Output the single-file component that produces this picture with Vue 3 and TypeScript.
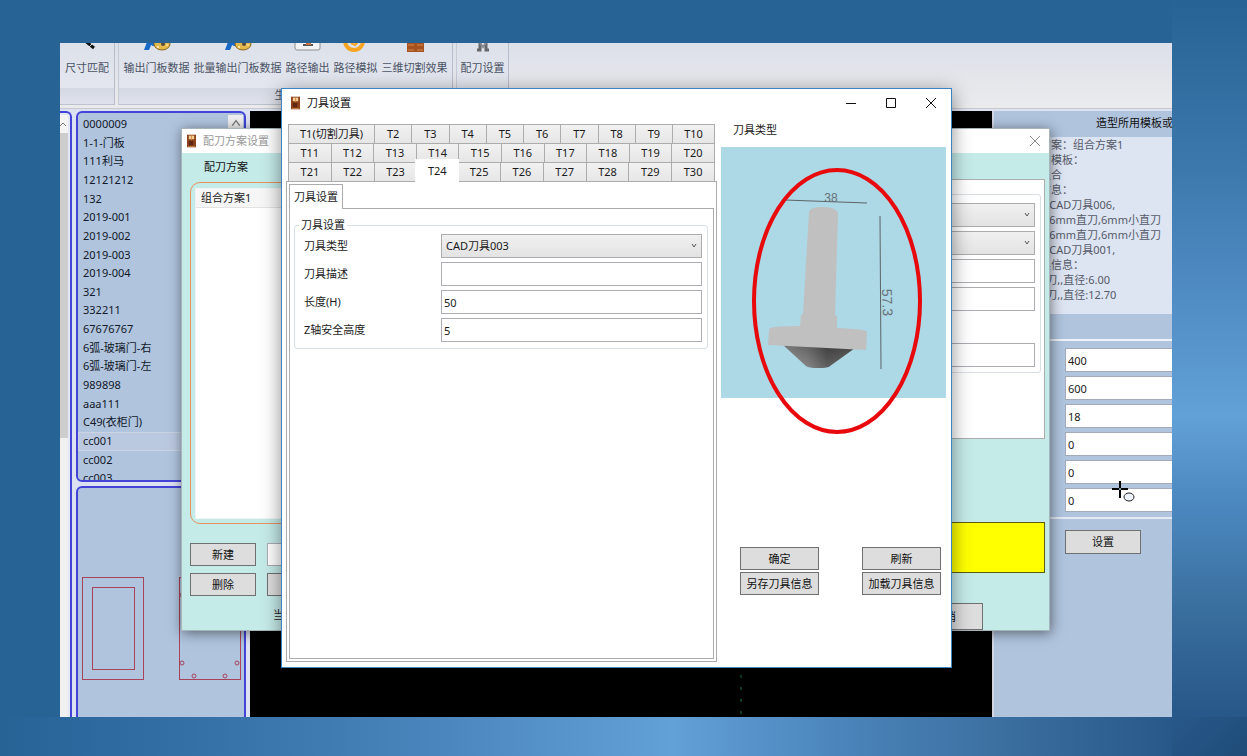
<script setup lang="ts">
import { ref } from 'vue'

const models = [
  '0000009', '1-1-门板', '111利马', '12121212', '132', '2019-001', '2019-002', '2019-003',
  '2019-004', '321', '332211', '67676767', '6弧-玻璃门-右', '6弧-玻璃门-左', '989898',
  'aaa111', 'C49(衣柜门)', 'cc001', 'cc002', 'cc003',
]
const currentModel = ref('cc001')

const tabRows: string[][] = [0, 1, 2].map((row) =>
  Array.from({ length: 10 }, (_, i) => `T${row * 10 + i + 1}`),
)
const currentTab = ref('T24')
const tabLabel = (name: string) => (name === 'T1' ? 'T1(切割刀具)' : name)

const infoLines = [
  '方案：组合方案1', '用模板：', '组合', '信息：', '1:CAD刀具006,', '1:6mm直刀,6mm小直刀',
  '1:6mm直刀,6mm小直刀', '1:CAD刀具001,', '具信息：', '1刀,,直径:6.00', '1刀,,直径:12.70',
]

const sizes = ref(['400', '600', '18', '0', '0', '0'])
const sizeNames = ['高度', '宽度', '厚度', '参数一', '参数二', '参数三']

const toolType = ref('CAD刀具003')
const toolNote = ref('')
const toolLength = ref('50')
const safeHeight = ref('5')
</script>

<template>
  <div class="backdrop">
    <main class="stage">
      <header class="ribbon">
        <section class="group g-size">
          <div class="tools">
            <button class="tool">
              <svg viewBox="0 0 30 10"><path d="M12 -3 L22 5" stroke="#111" stroke-width="3" fill="none" /><path d="M17 4 l3 -3" stroke="#ddd" fill="none" /></svg>
              <span>尺寸匹配</span>
            </button>
          </div>
          <div class="caption"></div>
        </section>
        <section class="group g-output">
          <div class="tools">
            <button v-for="name in ['输出门板数据', '批量输出门板数据']" :key="name" class="tool">
              <svg viewBox="0 0 30 10">
                <path d="M5 -1 L2 7 h5 L10 0 z" fill="#1769c8" />
                <path d="M9 0 q5 4 9 -1" stroke="#1769c8" stroke-width="3" fill="none" />
                <ellipse cx="20" cy="1" rx="8" ry="6" fill="#e3b84c" stroke="#8d681c" />
                <circle cx="16" cy="4" r="1" fill="#fff4c2" /><circle cx="21" cy="1" r="2" fill="#5b4a3b" />
                <circle cx="25" cy="2" r="1" fill="#f5e69a" />
              </svg>
              <span>{{ name }}</span>
            </button>
            <button class="tool">
              <svg viewBox="0 0 30 10">
                <rect x="2" y="-10" width="25" height="17" rx="2" fill="#f4f4f4" stroke="#8d8d90" />
                <path d="M10 2 h10" stroke="#555" stroke-width="2" /><path d="M13 1 h5" stroke="#cc7542" stroke-width="2" />
              </svg>
              <span>路径输出</span>
            </button>
            <button class="tool">
              <svg viewBox="0 0 30 10"><path d="M4 -2 a9 9 0 0 0 18 0" fill="none" stroke="#f7a423" stroke-width="4" /><path d="M10 0 l4 2 4 -4" fill="none" stroke="#f7a423" stroke-width="2" /></svg>
              <span>路径模拟</span>
            </button>
            <button class="tool">
              <svg viewBox="0 0 30 10"><rect x="7" y="-4" width="17" height="13" fill="#a65220" /><path d="M8 2 h6 M17 2 h6 M8 7 h6 M17 7 h6" stroke="#d58a4b" /></svg>
              <span>三维切割效果</span>
            </button>
          </div>
          <div class="caption">生产</div>
        </section>
        <section class="group g-tool">
          <div class="tools">
            <button class="tool">
              <svg viewBox="0 0 30 10"><path d="M12 -1 v8 h-3 M18 -1 v8 h3" fill="none" stroke="#66676b" stroke-width="3" /><path d="M12 0 l3 4 3 -4" fill="none" stroke="#88898d" stroke-width="2" /></svg>
              <span>配刀设置</span>
            </button>
          </div>
          <div class="caption blank"></div>
        </section>
      </header>

      <div class="workspace">
        <aside class="rail">
          <div class="rail-up"><svg viewBox="0 0 8 8"><path d="M0 6 l3 -3 3 3" fill="none" stroke="#777" /></svg></div>
          <div class="rail-thumb"></div>
          <div class="rail-track"></div>
        </aside>
        <div class="browser">
          <div class="card models">
            <ul>
              <li v-for="m in models" :key="m" :class="{ chosen: m === currentModel }" @click="currentModel = m">{{ m }}</li>
            </ul>
            <button class="scroll-up" aria-label="向上滚动">
              <svg viewBox="0 0 8 8"><path d="M1 6 l3 -4 3 4" fill="none" stroke="#777" /></svg>
            </button>
          </div>
          <div class="card preview">
            <svg width="166" height="229" viewBox="0 0 166 229">
              <g fill="none" stroke="#a8435c">
                <rect x="4.500" y="89.500" width="61" height="102" /><rect x="14.500" y="99.500" width="42" height="82" />
                <rect x="101.500" y="89.500" width="61" height="102" />
                <circle cx="104" cy="107" r="2" /><circle cx="104" cy="175" r="2" /><circle cx="159" cy="175" r="2" />
                <circle cx="116" cy="188" r="2" /><circle cx="147" cy="188" r="2" />
              </g>
            </svg>
          </div>
        </div>
        <div class="canvas"><div class="axis"></div></div>
        <aside class="params">
          <h2>造型所用模板或刀具</h2>
          <div class="info"><p v-for="(line, i) in infoLines" :key="i">{{ line }}</p></div>
          <form class="size-form" @submit.prevent>
            <input v-for="(n, i) in sizeNames" :key="n" v-model="sizes[i]" :aria-label="n" type="text" />
          </form>
          <button class="btn apply">设置</button>
        </aside>
      </div>

      <section class="window scheme" aria-label="配刀方案设置">
        <header class="titlebar">
          <svg class="door" viewBox="0 0 10 14"><rect width="10" height="14" fill="#8c431b" /><rect x="2" y="1" width="6" height="4" fill="#f3cf95" /><path d="M5 1 v5 M1 13 h8" stroke="#d28843" /><rect x="2" y="7" width="5" height="5" fill="#632810" /></svg>
          <span class="title">配刀方案设置</span>
          <button class="caption-btn" aria-label="关闭"><svg viewBox="0 0 10 10"><path d="M0 0 L10 10 M10 0 L0 10" stroke="#888" fill="none" /></svg></button>
        </header>
        <div class="scheme-body">
          <div class="scheme-left">
            <h3>配刀方案</h3>
            <div class="scheme-box"><ul><li>组合方案1</li></ul></div>
            <div class="scheme-actions">
              <button class="btn">新建</button><input type="text" aria-label="方案名称" />
              <button class="btn">删除</button><button class="btn" aria-label="重命名"></button>
            </div>
            <p class="now">当前方案</p>
          </div>
          <div class="scheme-right">
            <div class="sheet">
              <div class="sheet-group">
                <div v-for="n in 2" :key="n" class="picker">
                  <select :aria-label="`刀具选择${n}`"><option></option></select>
                  <svg viewBox="0 0 8 6"><path d="M2 1 l2 3 2 -3" fill="none" stroke="#555" /></svg>
                </div>
                <input type="text" aria-label="刀具描述" /><input type="text" aria-label="刀具长度" />
                <input class="apart" type="text" aria-label="安全高度" />
              </div>
            </div>
            <div class="notice"></div>
            <button class="btn cancel">取消</button>
          </div>
        </div>
      </section>

      <section class="window dialog" aria-label="刀具设置">
        <header class="titlebar">
          <svg class="door" viewBox="0 0 10 14"><rect width="10" height="14" fill="#8c431b" /><rect x="2" y="1" width="6" height="4" fill="#f3cf95" /><path d="M5 1 v5 M1 13 h8" stroke="#d28843" /><rect x="2" y="7" width="5" height="5" fill="#632810" /></svg>
          <span class="title">刀具设置</span>
          <button class="caption-btn" aria-label="最小化"><svg viewBox="0 0 10 10"><path d="M0 5.500 h10" stroke="#111" fill="none" /></svg></button>
          <button class="caption-btn" aria-label="最大化"><svg viewBox="0 0 10 10"><path d="M.5 .5 h9 v9 h-9 z" stroke="#111" fill="none" /></svg></button>
          <button class="caption-btn" aria-label="关闭"><svg viewBox="0 0 10 10"><path d="M0 0 L10 10 M10 0 L0 10" stroke="#111" fill="none" /></svg></button>
        </header>
        <div class="dialog-body">
          <div class="tabs-side">
            <div class="tabs" role="tablist">
              <div v-for="(row, r) in tabRows" :key="r" class="tab-row">
                <button
                  v-for="t in row" :key="t" role="tab" class="tab"
                  :class="{ wide: t === 'T1', ten: t === 'T10', active: t === currentTab }"
                  :aria-selected="t === currentTab" @click="currentTab = t"
                >{{ tabLabel(t) }}</button>
              </div>
            </div>
            <div class="page">
              <button class="inner-tab" role="tab" aria-selected="true">刀具设置</button>
              <div class="inner-page">
                <fieldset>
                  <legend>刀具设置</legend>
                  <div class="fields">
                    <label for="tool-type">刀具类型</label>
                    <div class="picker">
                      <select id="tool-type" v-model="toolType"><option>CAD刀具003</option><option>CAD刀具001</option><option>CAD刀具006</option></select>
                      <svg viewBox="0 0 8 6"><path d="M2 1 l2 3 2 -3" fill="none" stroke="#555" /></svg>
                    </div>
                    <label for="tool-note">刀具描述</label><input id="tool-note" v-model="toolNote" type="text" />
                    <label for="tool-length">长度(H)</label><input id="tool-length" v-model="toolLength" type="text" />
                    <label for="tool-safe">Z轴安全高度</label><input id="tool-safe" v-model="safeHeight" type="text" />
                  </div>
                </fieldset>
              </div>
            </div>
          </div>
          <div class="view-side">
            <h3>刀具类型</h3>
            <svg class="model" viewBox="0 0 225 251">
              <defs>
                <linearGradient id="cone" x1="0" x2="1" y1="0" y2="0">
                  <stop offset="0" stop-color="#9c9c9c" /><stop offset=".35" stop-color="#7c7c7c" />
                  <stop offset=".62" stop-color="#484848" /><stop offset="1" stop-color="#555" />
                </linearGradient>
                <linearGradient id="fade" x1="0" x2="0" y1="0" y2="1">
                  <stop offset="0" stop-color="#222" stop-opacity=".3" /><stop offset="1" stop-color="#999" stop-opacity=".3" />
                </linearGradient>
              </defs>
              <rect width="225" height="251" fill="#add8e6" />
              <path d="M61 197 L134 201 L109 219 Q107 221 97 221 Q88 221 85 219 Z" fill="url(#cone)" />
              <path d="M61 197 L134 201 L109 219 Q107 221 97 221 Q88 221 85 219 Z" fill="url(#fade)" />
              <path d="M88 65 Q89 60 102 60 Q116 60 117 67 L114 168 L116 169 L116 181 Q145 182 146 185 L145 203 L47 198 L48 182 Q49 179 79 179 L80 168 L82 167 Z" fill="#c0c0c0" />
              <path d="M64 53 L146 56" stroke="#5c6468" stroke-width="1" />
              <path d="M159 69 L160 222" stroke="#5c6468" stroke-width="1" />
              <text x="110" y="55" class="dim">38</text>
              <text x="161" y="142" class="dim start" transform="rotate(88 161 142)">57.3</text>
              <ellipse cx="116" cy="154" rx="83" ry="131" fill="none" stroke="#e8090c" stroke-width="4" />
            </svg>
            <div class="actions">
              <button class="btn">确定</button><button class="btn">刷新</button>
              <button class="btn">另存刀具信息</button><button class="btn">加载刀具信息</button>
            </div>
          </div>
        </div>
      </section>

      <svg class="pointer" viewBox="0 0 26 24" aria-hidden="true">
        <path d="M9 1 v17 M1 9 h16" stroke="#000" stroke-width="2" /><circle cx="9" cy="9" r="1" fill="#8fd0e0" />
        <ellipse cx="18" cy="17" rx="5" ry="4" fill="#eef3fa" stroke="#222" />
      </svg>
    </main>
  </div>
</template>

<style>
html, body { margin: 0; }
</style>

<style scoped>
* { box-sizing: border-box; }
button, input, select { font: inherit; color: inherit; margin: 0; border-radius: 0; }
h2, h3, p, ul { margin: 0; padding: 0; font-size: inherit; font-weight: 400; list-style: none; }
.backdrop {
  min-height: 100vh;
  display: flex;
  padding: 43px 75px 39px 60px;
  background:
    linear-gradient(135deg, #28588a 0, #1f4c78 100%) right bottom / 75px 39px no-repeat,
    linear-gradient(180deg, #286396 0, #3d78ac 22%, #5390c8 42%, #62a0d8 55%, #4b87bf 67%, #3a709f 80%, #28588a 94%, #28588a 100%) right top / 75px 100% no-repeat,
    linear-gradient(90deg, #286396 0, #2f6ba1 10%, #3f7ab0 26%, #62a0d8 54%, #4b85bb 67%, #3c70a1 80%, #28588a 94%, #28588a 100%) left bottom / 100% 39px no-repeat,
    #286396;
  font: 11px/16px "Noto Sans", "Noto Sans CJK SC", sans-serif;
  color: #1a1a1a;
}
.stage { position: relative; flex: 1; min-width: 0; display: flex; flex-direction: column; overflow: hidden; background: #e2e4ea; }

.ribbon { display: flex; gap: 3px; height: 66px; background: linear-gradient(#dce0e9, #ebebed); border-bottom: 1px solid #c7c9ce; padding-bottom: 3px; }
.group { display: flex; flex-direction: column; border-right: 1px solid #b7bdca; border-bottom: 1px solid #bcc2ce; background: linear-gradient(#dde1ea, #e5e8ef); }
.g-size { width: 55px; }
.g-output { width: 335px; border-left: 1px solid #c5cad5; }
.g-tool { width: 53px; border-left: 1px solid #c5cad5; }
.tools { flex: 1; display: flex; justify-content: center; gap: 4px; }
.tool { display: flex; flex-direction: column; align-items: center; gap: 7px; padding: 0; border: 0; background: none; color: #4b5365; white-space: nowrap; }
.tool svg { width: 30px; height: 10px; }
.caption { height: 16px; text-align: center; line-height: 14px; color: #4b5365; background: linear-gradient(#d4d8e3, #dfe2eb); }

.workspace { flex: 1; display: flex; min-height: 0; padding-top: 2px; background: #dde2f2; }
.rail { width: 12px; display: flex; flex-direction: column; padding: 2px 2px 0 0; border-right: 2px solid #4343d8; border-top: 2px solid #4343d8; border-top-right-radius: 6px; background: #e4e8f5; }
.rail-up { height: 18px; background: #f4f4f4; }
.rail-up svg { display: block; width: 8px; height: 18px; }
.rail-thumb { flex: 306; background: #cdcdcd; }
.rail-track { flex: 280; background: #f0f0f0; }
.browser { width: 178px; display: flex; flex-direction: column; gap: 4px; padding: 0 4px; }
.card { border: 2px solid #4343d8; border-radius: 6px; background: #b0c4de; overflow: hidden; }
.models { flex: none; height: 371px; display: flex; align-items: flex-start; padding: 2px 1px 2px 0; }
.models ul { flex: 1; height: 373px; display: grid; grid-auto-rows: 1fr; }
.models li { padding-left: 4px; border: 1px solid transparent; color: #111827; }
.models li.chosen { background: #bac8e0; border-color: #cbd4e5; }
.scroll-up { width: 15px; height: 17px; padding: 0; border: 0; background: #eee; }
.scroll-up svg { width: 10px; height: 10px; }
.preview { flex: 1; min-height: 0; border-bottom: 0; border-radius: 6px 6px 0 0; }
.preview svg { display: block; }
.canvas { position: relative; flex: 1; background: #000; }
.axis { position: absolute; left: 66%; top: 0; bottom: 0; width: 2px; background: repeating-linear-gradient(0deg, #000 0 3px, #0d3b22 3px 6px, #000 6px 12px); }
.params { width: 180px; border-left: 2px solid #d3d6e2; background: #b0c4de; overflow: hidden; }
.params h2 { height: 26px; padding-left: 102px; line-height: 24px; white-space: nowrap; color: #111; }
.info { height: 177px; padding-left: 46px; background: #dde4f2; color: #555b68; }
.info p { line-height: 15px; white-space: nowrap; }
.size-form { display: grid; gap: 4px; margin-top: 25px; padding: 7px 0 5px 71px; border-top: 2px solid #eef2fa; border-bottom: 2px solid #e3eaf5; }
.size-form input { width: 100%; height: 24px; padding: 0 2px; border: 1px solid #a3abbb; border-right: 0; background: #fff; }
.btn { height: 23px; padding: 0; border: 1px solid #707070; background: #ddd; color: #111; white-space: nowrap; }
.apply { display: block; width: 76px; height: 24px; margin: 11px 0 0 71px; }

.window { position: absolute; display: flex; flex-direction: column; }
.titlebar { display: flex; align-items: center; background: #fff; }
.door { width: 9px; height: 14px; }
.title { flex: 1; margin-left: 7px; }
.caption-btn { display: flex; justify-content: center; align-items: center; width: 40px; height: 24px; padding: 0; border: 0; background: none; }
.caption-btn svg { width: 10px; height: 10px; overflow: visible; }

.scheme { inset: 85px 122px 86px 121px; border: 1px solid #a5b5b8; background: #c5ebe9; box-shadow: 1px 2px 12px rgba(0, 0, 0, .5); }
.scheme .titlebar { flex: none; height: 24px; padding-left: 5px; color: #999; }
.scheme .caption-btn { width: 28px; }
.scheme-body { flex: 1; min-height: 0; display: flex; justify-content: space-between; }
.scheme-left { width: 300px; display: flex; flex-direction: column; padding: 6px 0 7px 8px; }
.scheme-left h3 { margin: 0 0 7px 14px; color: #111; }
.scheme-box { flex: 1; padding: 5px 4px 4px; border: 1px solid #e6935f; border-radius: 10px; }
.scheme-box ul { height: 100%; background: #fff; border: 1px solid #eef3f3; }
.scheme-box li { height: 19px; padding-left: 5px; line-height: 18px; border-bottom: 1px solid #e3e3e3; background: #f6f6f6; }
.scheme-actions { display: grid; grid-template-columns: 66px 100px; gap: 7px 11px; margin-top: 19px; }
.scheme-actions input { width: 100%; height: 23px; border: 1px solid #abadb3; background: #fff; }
.now { margin: 11px 0 0 83px; }
.scheme-right { width: 400px; padding: 26px 4px 0 0; display: flex; flex-direction: column; }
.sheet { height: 260px; padding: 14px 3px 0; border: 1px solid #acacac; background: #fff; }
.sheet-group { display: grid; gap: 4px; padding: 8px 5px 5px; border: 1px solid #d9dfe4; border-radius: 3px; }
.sheet-group input, .fields input { width: 100%; height: 24px; padding: 0 2px; border: 1px solid #abadb3; background: #fff; }
.sheet-group .apart { margin-top: 28px; }
.notice { height: 51px; margin-top: 83px; border: 1px solid #5d5d12; background: #ff0; }
.cancel { align-self: flex-end; width: 76px; height: 27px; margin: 30px 62px 0 0; }

.picker { position: relative; display: flex; }
.picker select { appearance: none; width: 100%; height: 24px; padding: 0 4px; border: 1px solid #acacac; background: linear-gradient(#f0f0f0, #e3e3e3); }
.picker svg { position: absolute; right: 4px; top: 9px; width: 8px; height: 6px; pointer-events: none; }

.dialog { inset: 45px 220px 49px 221px; border: 1px solid #3d85c0; background: #fff; box-shadow: 0 4px 18px rgba(0, 0, 0, .45); }
.dialog .titlebar { flex: none; height: 27px; padding-left: 9px; color: #111; }
.dialog-body { flex: 1; min-height: 0; display: flex; gap: 4px; padding: 8px 5px 5px 4px; }
.tabs-side { flex: 1; min-width: 0; display: flex; flex-direction: column; }
.tabs { padding: 0 2px; }
.tab-row { display: flex; height: 19px; }
.tab { flex: 1 1 0; min-width: 0; padding: 0; border: 1px solid #acacac; border-bottom: 0; margin-right: -1px; background: linear-gradient(#f1f1f1, #e6e6e6); line-height: 16px; white-space: nowrap; }
.tab:last-child { margin-right: 0; }
.tab.wide { flex: none; width: 87px; }
.tab.ten { flex: none; width: 43px; }
.tab.active { position: relative; z-index: 1; margin: -3px -2px -1px -1px; border-color: #fff; background: #fff; }
.page { flex: 1; display: flex; flex-direction: column; align-items: flex-start; padding: 2px; border: 1px solid #acacac; }
.inner-tab { position: relative; height: 25px; margin-bottom: -1px; padding: 0 4px; border: 1px solid #acacac; border-bottom: 0; background: #fff; z-index: 1; }
.inner-page { align-self: stretch; flex: 1; padding: 8px 5px 0 4px; border: 1px solid #acacac; }
fieldset { min-width: 0; margin: 0; padding: 1px 5px 6px 9px; border: 1px solid #d5dfe5; border-radius: 3px; }
legend { height: 16px; margin-left: -5px; padding: 0 2px; }
.fields { display: grid; grid-template-columns: 1fr 261px; row-gap: 4px; align-items: center; }
.view-side { width: 225px; display: flex; flex-direction: column; }
.view-side h3 { margin: -2px 0 9px 12px; }
.model { display: block; width: 225px; height: 251px; overflow: visible; }
.dim { font: 12px "Liberation Sans", sans-serif; fill: #687176; text-anchor: middle; }
.dim.start { font-size: 14px; text-anchor: start; }
.actions { margin: 149px 5px 0 19px; display: grid; grid-template-columns: 79px 79px; justify-content: space-between; gap: 2px; }
.pointer { position: absolute; left: 1051px; top: 437px; width: 26px; height: 24px; pointer-events: none; }
</style>
